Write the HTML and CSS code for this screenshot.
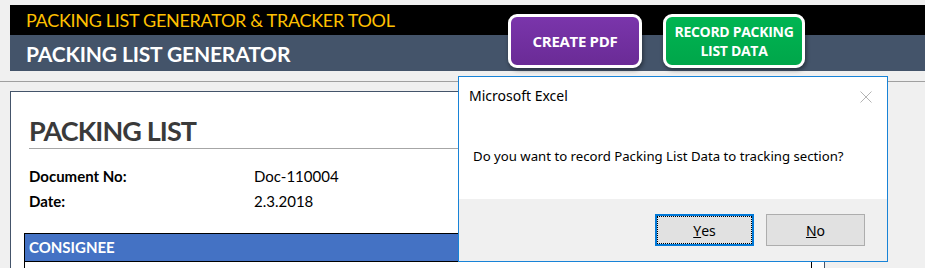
FILE: index.html
```html
<!DOCTYPE html>
<html lang="en">
<head>
    <meta charset="UTF-8">
    <title>Packing List Generator</title>
    <link rel="stylesheet" href="styles.css">
</head>
<body>
    <div class="banner">
        <div class="banner-top">PACKING LIST GENERATOR &amp; TRACKER TOOL</div>
        <div class="banner-sub">PACKING LIST GENERATOR</div>
        <div class="banner-actions">
            <button class="macro-btn purple">CREATE PDF</button>
            <button class="macro-btn green">RECORD PACKING<br>LIST DATA</button>
        </div>
    </div>

    <div class="divider"></div>

    <div class="sheet">
        <h1 class="sheet-title">PACKING LIST</h1>
        <div class="meta">
            <div class="meta-row"><span class="meta-label">Document No:</span><span>Doc-110004</span></div>
            <div class="meta-row"><span class="meta-label">Date:</span><span>2.3.2018</span></div>
        </div>
        <div class="section">
            <div class="section-head">CONSIGNEE</div>
            <div class="section-body"></div>
        </div>
    </div>

    <div class="msgbox">
        <div class="msgbox-title">
            <span>Microsoft Excel</span>
            <svg class="msgbox-close" width="12" height="12" viewBox="0 0 12 12">
                <path d="M0.5 0.5 L11.5 11.5 M11.5 0.5 L0.5 11.5" stroke="#b4b4b4" stroke-width="1" fill="none"/>
            </svg>
        </div>
        <div class="msgbox-text">Do you want to record Packing List Data to tracking section?</div>
        <div class="msgbox-footer">
            <button class="dlg-btn default"><span><u>Y</u>es</span></button>
            <button class="dlg-btn"><span><u>N</u>o</span></button>
        </div>
    </div>
</body>
</html>
```

FILE: styles.css
```css
* {
    margin: 0;
    padding: 0;
    box-sizing: border-box;
}

body {
    background: #f0f0f0;
    width: 925px;
    height: 268px;
    overflow: hidden;
    position: relative;
    padding-top: 5px;
    font-family: Lato, 'Open Sans', sans-serif;
}

/* шапка */
.banner {
    position: relative;
    margin-left: 10px;
}

.banner-top {
    height: 30px;
    background: #000;
    color: #ffc000;
    font-size: 18px;
    line-height: 30px;
    padding-left: 16px;
    letter-spacing: -0.3px;
}

.banner-sub {
    height: 36px;
    background: #44546a;
    color: #fff;
    font-weight: 700;
    font-size: 21px;
    line-height: 38px;
    padding-left: 16px;
    letter-spacing: -0.15px;
}

.banner-actions {
    position: absolute;
    top: 9px;
    left: 498px;
    display: flex;
    gap: 21px;
}

.macro-btn {
    height: 54px;
    border: 3px solid #fff;
    border-radius: 9px;
    color: #fff;
    font-family: 'Open Sans', sans-serif;
    font-weight: 700;
    font-size: 14px;
    line-height: 19px;
    letter-spacing: -0.3px;
    box-shadow: 1px 2px 4px rgba(0, 0, 0, 0.45);
}

.macro-btn.purple {
    width: 134px;
    font-size: 15px;
    background: linear-gradient(#7a35ab, #6a2b96);
}

.macro-btn.green {
    width: 142px;
    background: linear-gradient(#00b552, #00a64a);
}

.divider {
    margin-top: 10px;
    border-top: 1px solid #a0a0a0;
}

/* лист */
.sheet {
    margin: 9px 0 0 10px;
    width: 815px;
    height: 177px;
    overflow: hidden;
    background: #fff;
    border: 1px solid #44546a;
    border-bottom: none;
    padding: 22px 12px 0 13px;
}

.sheet-title {
    font-size: 27px;
    font-weight: 700;
    color: #3a3a3a;
    line-height: 34px;
    margin-left: 5px;
    padding-bottom: 0;
    border-bottom: 1px solid #a6a6a6;
    letter-spacing: -0.9px;
}

.meta {
    margin: 15px 0 0 5px;
    font-size: 15px;
    color: #000;
}

.meta-row {
    display: flex;
    height: 25px;
    line-height: 25px;
}

.meta-label {
    width: 225px;
    font-weight: 700;
}

.section {
    margin-top: 19px;
    border: 1px solid #000;
}

.section-head {
    background: #4472c4;
    color: #fff;
    font-weight: 700;
    font-size: 15px;
    height: 28px;
    line-height: 27px;
    padding-left: 4px;
    border-bottom: 1px solid #000;
}

.section-body {
    height: 20px;
}

/* окно сообщения */
.msgbox {
    position: absolute;
    left: 458px;
    top: 76px;
    width: 430px;
    height: 186px;
    background: #fff;
    border: 1px solid #1883d7;
    font-family: 'Noto Sans', 'Open Sans', sans-serif;
    display: flex;
    flex-direction: column;
}

.msgbox-title {
    display: flex;
    justify-content: space-between;
    align-items: center;
    height: 37px;
    padding: 0 15px 0 10px;
    font-size: 14px;
    color: #000;
}

.msgbox-close {
    margin-top: 2px;
}

.msgbox-text {
    flex: 1;
    padding: 33px 0 0 14px;
    font-size: 13.2px;
    color: #000;
}

.msgbox-footer {
    height: 62px;
    background: #f0f0f0;
    display: flex;
    justify-content: flex-end;
    align-items: flex-start;
    gap: 12px;
    padding: 15px 22px 0 0;
}

.dlg-btn {
    width: 99px;
    height: 32px;
    background: #e1e1e1;
    border: 1px solid #adadad;
    font-family: 'Noto Sans', 'Open Sans', sans-serif;
    font-size: 14px;
    color: #000;
    display: flex;
    align-items: center;
    justify-content: center;
}

.dlg-btn.default {
    border: 2px solid #0078d7;
}

.dlg-btn.default span {
    display: flex;
    align-items: center;
    justify-content: center;
    width: 100%;
    height: 100%;
    border: 1px dotted #000;
}
```
